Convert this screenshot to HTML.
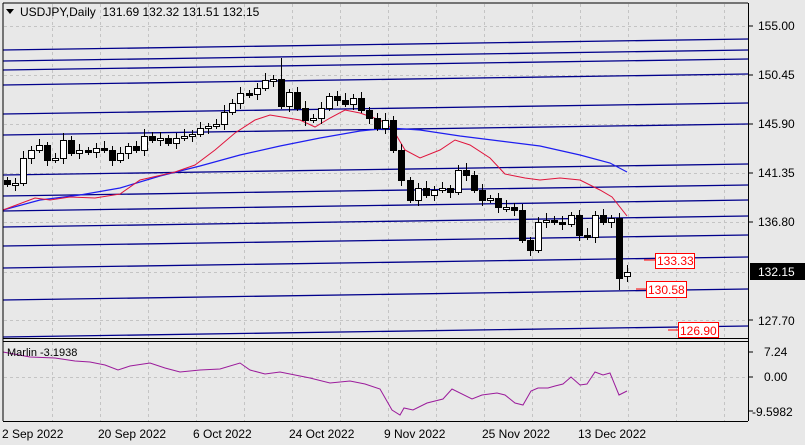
<!DOCTYPE html>
<html><head><meta charset="utf-8"><style>
html,body{margin:0;padding:0;background:#e8e8e8;}
svg{display:block;font-family:"Liberation Sans",sans-serif;}
</style></head><body>
<svg id="s" width="805" height="445" viewBox="0 0 805 445" xmlns="http://www.w3.org/2000/svg">
<rect x="0" y="0" width="805" height="445" fill="#e8e8e8"/>
<g id="grid" stroke="#c4c4c4" stroke-dasharray="3,3" stroke-width="1"></g>
<g id="lv" stroke="#00008b" stroke-width="1.3"></g>
<polyline fill="none" stroke="#1e1ef0" stroke-width="1.2" points="3,210 40,200 80,195 120,188 160,176 200,166 240,155 280,146 320,138 360,131 390,128 420,130 460,136 500,141 540,146 580,155 610,163 627,172"/>
<polyline fill="none" stroke="#e0143c" stroke-width="1" points="3,210 35,198 50,200 70,197 95,198 120,194 140,180 175,172 195,165 215,150 235,133 255,120 270,115 282,117 300,120 315,127 330,118 345,110 360,113 380,120 392,128 405,150 420,158 440,150 455,140 470,145 490,158 505,174 525,178 540,180 560,178 580,180 600,190 612,197 627,216"/>
<g id="c"></g>
<polyline fill="none" stroke="#9b1b9b" stroke-width="1" points="3,352 30,357 55,358 75,361 90,362 105,365 118,370 130,366 150,363 165,368 180,372 200,370 220,369 240,363 250,370 265,374 280,372 295,375 310,378 330,383 350,381 365,384 380,389 392,410 400,415 404,408 413,410 427,403 443,399 452,389 472,399 482,395 497,393 505,395 515,403 523,405 531,391 538,388 548,388 555,386 563,384 571,377 580,385 587,384 595,372 603,375 610,373 619,395 627,391"/>
<line x1="3" y1="3" x2="748" y2="3" stroke="#000"/>
<line x1="3" y1="3" x2="3" y2="421" stroke="#000"/>
<line x1="748.5" y1="3" x2="748.5" y2="421" stroke="#000"/>
<line x1="3" y1="338.5" x2="748" y2="338.5" stroke="#000"/>
<line x1="3" y1="341.5" x2="748" y2="341.5" stroke="#000"/>
<line x1="3" y1="421.5" x2="748" y2="421.5" stroke="#000"/>
<path d="M6,9 L14,9 L10,14 Z" fill="#000"/>
<text x="20" y="16" font-size="12" fill="#000" xml:space="preserve">USDJPY,Daily  131.69 132.32 131.51 132.15</text>
<text x="7" y="356" font-size="11" fill="#000">Marlin -3.1938</text>
<g font-size="12" fill="#000">
<text x="758" y="30">155.00</text><text x="758" y="79">150.45</text><text x="758" y="128">145.90</text><text x="758" y="177">141.35</text><text x="758" y="226">136.80</text><text x="758" y="325">127.70</text>
<text x="764" y="356">7.24</text><text x="764" y="381">0.00</text><text x="752" y="416">-9.5982</text>
</g>
<rect x="750" y="263" width="55" height="17" fill="#000"/>
<text x="758" y="276" font-size="12" fill="#fff">132.15</text>
<g stroke="#000"><line x1="749" y1="26" x2="753" y2="26"/><line x1="749" y1="75" x2="753" y2="75"/><line x1="749" y1="124" x2="753" y2="124"/><line x1="749" y1="173" x2="753" y2="173"/><line x1="749" y1="222" x2="753" y2="222"/><line x1="749" y1="320" x2="753" y2="320"/><line x1="749" y1="352" x2="753" y2="352"/><line x1="749" y1="377" x2="753" y2="377"/><line x1="749" y1="411" x2="753" y2="411"/></g>
<g stroke="#f00" fill="#fff" font-size="12">
<line x1="644" y1="260" x2="655" y2="260"/><rect x="655.5" y="253.5" width="39" height="15"/>
<line x1="636" y1="289" x2="646" y2="289"/><rect x="646.5" y="281.5" width="40" height="16"/>
<line x1="668" y1="330" x2="678" y2="330"/><rect x="678.5" y="322.5" width="40" height="15"/>
</g>
<g fill="#f00" font-size="12"><text x="657" y="265">133.33</text><text x="648" y="294">130.58</text><text x="680" y="335">126.90</text></g>
<g font-size="12" fill="#000">
<text x="2" y="438">2 Sep 2022</text><text x="98" y="438">20 Sep 2022</text><text x="193" y="438">6 Oct 2022</text><text x="289" y="438">24 Oct 2022</text><text x="384" y="438">9 Nov 2022</text><text x="482" y="438">25 Nov 2022</text><text x="578" y="438">13 Dec 2022</text>
</g>
</svg>
<script>
(function(){
var NS="http://www.w3.org/2000/svg";
function el(p,t,a){var e=document.createElementNS(NS,t);for(var k in a)e.setAttribute(k,a[k]);p.appendChild(e);return e;}
var g=document.getElementById("grid");
for(var k=1;k<=15;k++){var x=4+48*k+0.5;el(g,"line",{x1:x,y1:4,x2:x,y2:338});el(g,"line",{x1:x,y1:342,x2:x,y2:421});}
[26,75,124,173,222,272,320].forEach(function(y){el(g,"line",{x1:4,y1:y+.5,x2:748,y2:y+.5});});
el(g,"line",{x1:4,y1:377.5,x2:748,y2:377.5});
var lv=document.getElementById("lv");
[50,61,70,85,114,135,175,196,211,227,246,268,300,337].forEach(function(y){el(lv,"line",{x1:3,y1:y,x2:748,y2:y-11});});
var cl=[184,183,158,150,145,160,158,140,153,150,152,148,150,160,153,146,150,136,140,138,143,138,136,134,128,126,124,112,103,93,94,88,80,79,106,92,108,120,118,108,96,100,104,98,110,118,128,120,150,180,200,188,195,190,188,192,170,175,190,200,198,207,207,210,240,250,222,220,222,224,215,235,237,215,222,218,278,272];
var c=document.getElementById("c");
for(var i=0;i<cl.length;i++){var x=Math.round(7+i*8.05);var o=(i==0?180:cl[i-1]);if(i==77)o=276;var cc=cl[i];
var tp=Math.min(o,cc),bt=Math.max(o,cc);if(bt-tp<2)bt=tp+2;
var hi=tp-3-(i*7%5),lo=bt+3+(i*3%6);if(i==34)hi=58;if(i==76)lo=290;
el(c,"line",{x1:x+.5,y1:hi,x2:x+.5,y2:lo,stroke:"#000"});
el(c,"rect",{x:x-2.5,y:tp+.5,width:6,height:bt-tp,fill:cc>o?"#000":"#fff",stroke:"#000"});}
})();
</script>
</body></html>
